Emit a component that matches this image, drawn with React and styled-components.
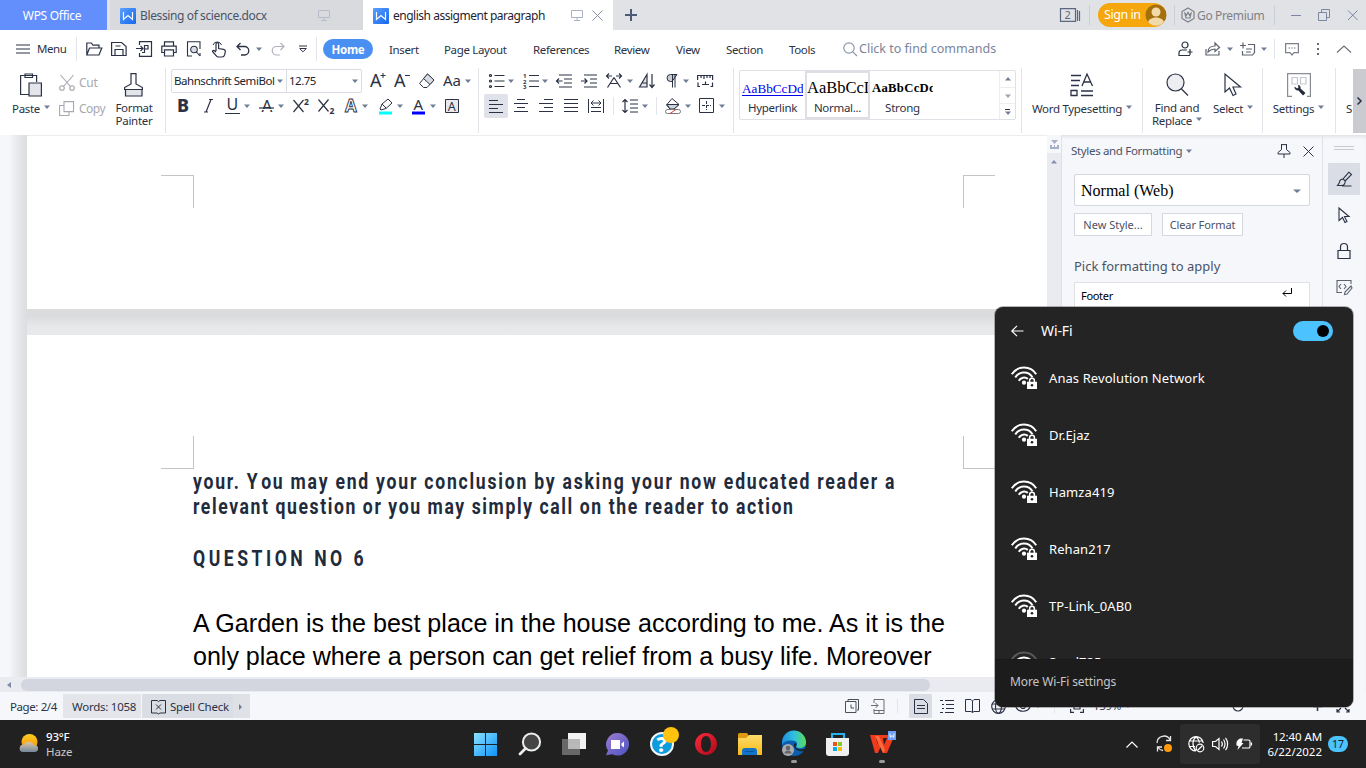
import React from 'react';
import styled, { createGlobalStyle, css } from 'styled-components';

const ui = `'Noto Sans', 'Open Sans', 'Liberation Sans', sans-serif`;
const ink = '#2b3245';

const Global = createGlobalStyle`
  * { box-sizing: border-box; }
  body { margin: 0; background: #f5f7fa; overflow: hidden; }
`;

const Screen = styled.div`
  position: relative;
  width: 1366px;
  height: 768px;
  overflow: hidden;
  display: flex;
  flex-direction: column;
  font-family: ${ui};
  font-size: 12px;
  color: ${ink};
  white-space: nowrap;
`;

/* ---------- shared parts ---------- */
const Cell = styled.div`
  flex: 0 0 ${p => p.$w}px;
  width: ${p => p.$w}px;
  height: ${p => (p.$h ? p.$h + 'px' : '100%')};
  display: flex;
  align-items: center;
  padding-top: ${p => p.$pt || 0}px;
`;

const Label = styled.span`
  font-size: ${p => p.$size || 12}px;
  letter-spacing: ${p => p.$ls || 0}px;
  color: ${p => p.$c || 'inherit'};
  font-weight: ${p => p.$weight || 400};
  line-height: 1;
`;

const Divider = styled.div`
  flex: 0 0 1px;
  width: 1px;
  height: ${p => p.$h}px;
  background: ${p => p.$c || '#e3e5ea'};
  align-self: ${p => p.$self || 'center'};
`;

const Svg = styled.svg`
  display: block;
  flex: none;
  overflow: visible;
`;

const Icon = ({ w = 16, h = 16, c = ink, sw = 1, children, ...rest }) => (
  <Svg width={w} height={h} viewBox={`0 0 ${w} ${h}`} fill="none" stroke={c} strokeWidth={sw} {...rest}>
    {children}
  </Svg>
);

const Caret = ({ c = '#6f7c98', up, w = 6 }) => (
  <Icon w={w} h={4} c="none"><path fill={c} d={up ? `M0 3.500h${w}L${w / 2} 0z` : `M0 .5h${w}L${w / 2} 4z`} /></Icon>
);

const Glyph = ({ x = 0, y, size, weight = 400, italic, c = ink, outline, children }) => (
  <text x={x} y={y} fontFamily="'Noto Sans', sans-serif" fontSize={size} fontWeight={weight}
    fontStyle={italic ? 'italic' : 'normal'} fill={outline ? 'none' : c} stroke={outline ? c : 'none'} strokeWidth={outline ? 0.9 : 0}>
    {children}
  </text>
);

/* ---------- title bar ---------- */
const TitleBar = styled.header`
  height: 30px;
  flex: none;
  display: flex;
  align-items: stretch;
  background: #e1e2e6;
`;
const OfficeTab = styled.div`
  width: 107px;
  background: #638ffd;
  color: #fff;
  display: flex;
  align-items: center;
  justify-content: center;
  padding: 2px 3px 0 0;
`;
const FileTab = styled.div`
  width: ${p => p.$w}px;
  margin-left: ${p => p.$ml || 0}px;
  padding-left: ${p => p.$pl}px;
  background: ${p => (p.$active ? '#fff' : '#d9dadd')};
  color: ${p => (p.$active ? '#1f2430' : '#4a5468')};
  display: flex;
  align-items: center;
`;
const SignIn = styled.div`
  width: 68px;
  height: 24px;
  border-radius: 12px;
  background: #f5a70d;
  color: #fff;
  display: flex;
  align-items: center;
  padding-left: 6px;
  gap: 4px;
`;

const DocLogo = () => (
  <Icon w={16} h={16} c="none">
    <defs><linearGradient id="dl" x1="0" y1="0" x2="1" y2="1"><stop offset="0" stopColor="#5aa0fb" /><stop offset="1" stopColor="#1668f0" /></linearGradient></defs>
    <rect width="16" height="16" rx="1" fill="url(#dl)" />
    <path d="M3.500 4v7.500L8 7.500l4.500 4V4" stroke="#fff" strokeWidth="1.200" />
  </Icon>
);
const Monitor = ({ c = '#a8b1c6' }) => (
  <Icon w={12} h={12} c={c}><path d="M.5 1.500h11v7h-11zM6 8.500v2.500M3 11.500h6" /></Icon>
);

/* ---------- menu row ---------- */
const MenuRow = styled.nav`
  height: 38px;
  flex: none;
  display: flex;
  align-items: center;
  background: #fff;
  padding-left: 16px;
`;
const HomePill = styled.div`
  width: 50px;
  height: 20px;
  border-radius: 10px;
  background: #4a90f2;
  color: #fff;
  display: flex;
  align-items: center;
  justify-content: center;
  padding-top: 2px;
`;

/* ---------- ribbon ---------- */
const Ribbon = styled.section`
  height: 67px;
  flex: none;
  display: flex;
  align-items: flex-start;
  background: #fff;
  position: relative;
`;
const Group = styled.div`
  flex: 0 0 ${p => p.$w}px;
  width: ${p => p.$w}px;
  height: 67px;
  padding-left: ${p => p.$pl || 0}px;
  display: flex;
  flex-direction: ${p => (p.$col ? 'column' : 'row')};
`;
const Row = styled.div`
  height: ${p => p.$h || 25}px;
  display: flex;
  align-items: center;
`;
const BigButton = styled.div`
  flex: 0 0 ${p => p.$w}px;
  display: flex;
  flex-direction: column;
  align-items: center;
  padding: 5px 0 0 ${p => p.$pl || 0}px;
`;
const BigLabel = styled.div`
  display: flex;
  align-items: center;
  gap: 4px;
  height: 13px;
  margin-top: ${p => p.$mt || 0}px;
  & > span { letter-spacing: -0.3px; }
  & > svg { margin-top: -3px; }
`;
const SmallButton = styled.div`
  height: 26px;
  display: flex;
  align-items: center;
  gap: 4px;
  padding-top: 2px;
  color: #a6a9b0;
`;
const FontBox = styled.div`
  width: 191px;
  height: 24px;
  border: 1px solid #d9dce2;
  border-radius: 2px;
  display: flex;
  align-items: center;
  color: #20242f;
`;
const FontPart = styled.div`
  width: ${p => p.$w}px;
  height: 22px;
  display: flex;
  align-items: center;
  justify-content: space-between;
  padding: 0 3px 0 2px;
  border-left: ${p => (p.$line ? '1px solid #d9dce2' : 'none')};
`;
const Pressed = styled.div`
  width: 24px;
  height: 24px;
  margin-left: -5px;
  border-radius: 2px;
  background: #dfe2e8;
  display: flex;
  align-items: center;
  justify-content: center;
`;
const Gallery = styled.div`
  width: 277px;
  height: 50px;
  margin-top: 2px;
  border: 1px solid #dfe1e6;
  border-radius: 2px;
  display: flex;
`;
const StyleCard = styled.div`
  width: ${p => p.$w}px;
  height: 48px;
  display: flex;
  flex-direction: column;
  align-items: center;
  overflow: hidden;
  ${p => p.$sel && css`border: 2px solid #dedfe4;`}
`;
const Sample = styled.div`
  width: 61px;
  height: ${p => (p.$sel ? 29 : 31)}px;
  padding-top: ${p => (p.$sel ? 6 : 9)}px;
  overflow: hidden;
  font-family: 'Liberation Serif', serif;
  font-size: ${p => p.$size}px;
  line-height: 17px;
  letter-spacing: ${p => p.$ls || 0}px;
  color: ${p => p.$c || '#000'};
  font-weight: ${p => p.$weight || 400};
  text-decoration: ${p => (p.$u ? 'underline' : 'none')};
  text-underline-offset: 2px;
`;
const GalleryScroll = styled.div`
  width: 16px;
  margin-left: auto;
  display: grid;
  grid-template-rows: repeat(3, 1fr);
  border-left: 1px solid #eceef1;
  & > div { display: flex; flex-direction: column; gap: 1px; align-items: center; justify-content: center; }
  & > div + div { border-top: 1px solid #eceef1; }
`;
const MoreBar = styled.div`
  width: 13px;
  height: 64px;
  margin-top: 1px;
  margin-left: auto;
  background: #c9cbd1;
  display: flex;
  align-items: center;
  justify-content: center;
`;

/* ---------- workspace ---------- */
const Workspace = styled.main`
  height: 557px;
  flex: none;
  display: flex;
  background: #f5f7fa;
  box-shadow: inset 0 3px 4px -2px rgba(0, 0, 0, 0.12);
`;
const DocColumn = styled.div`
  width: 1061px;
  display: flex;
  flex-direction: column;
`;
const DocView = styled.div`
  height: 542px;
  display: flex;
`;
const Gutter = styled.div`
  width: 27px;
  background: linear-gradient(to right, #f5f7fa 9px, #ebecef 15px, #dcdddf 27px);
`;
const Pages = styled.div`
  width: 1020px;
  display: flex;
  flex-direction: column;
  border-top: 1px solid #ececee;
`;
const Page = styled.div`
  height: ${p => p.$h}px;
  background: #fff;
  overflow: hidden;
`;
const PageGap = styled.div`
  height: 26px;
  background: linear-gradient(#dbdcde 7px, #e7e8ea 18px, #e8e9eb);
`;
const Marks = styled.div`
  display: flex;
  justify-content: space-between;
  width: 834px;
  height: 33px;
  margin: ${p => p.$mt}px 0 0 134px;
`;
const Mark = styled.div`
  width: ${p => (p.$right ? 32 : 33)}px;
  height: 33px;
  border: 0 solid #c4c4c4;
  border-top-width: ${p => (p.$low ? 0 : 1)}px;
  border-bottom-width: ${p => (p.$low ? 1 : 0)}px;
  border-left-width: ${p => (p.$right ? 1 : 0)}px;
  border-right-width: ${p => (p.$right ? 0 : 1)}px;
`;
const Prose = styled.div`
  padding-left: 166px;
`;
const Condensed = styled.div`
  width: max-content;
  font-family: 'Roboto', sans-serif;
  font-weight: 700;
  color: #222b3c;
  font-size: 22px;
  height: ${p => p.$h}px;
  line-height: 26px;
  letter-spacing: ${p => p.$ls}px;
  transform: scaleX(0.8);
  transform-origin: left;
`;
const Kern = styled.span`
  letter-spacing: ${p => p.$ls}px;
`;
const Body = styled.div`
  font-family: 'Liberation Sans', sans-serif;
  font-size: 25.1px;
  line-height: 33px;
  letter-spacing: ${p => p.$ls || 0}px;
  color: #000;
`;
const VScroll = styled.div`
  width: 14px;
  background: #e9ebf0;
  display: flex;
  flex-direction: column;
  align-items: center;
`;
const VTop = styled.div`
  width: 14px;
  height: 18px;
  background: #f5f7fa;
  display: flex;
  align-items: center;
  justify-content: center;
  margin-bottom: 7px;
`;
const HScroll = styled.div`
  height: 15px;
  background: #e9ebf0;
  display: flex;
  align-items: center;
  padding-left: 7px;
  gap: 10px;
`;
const HThumb = styled.div`
  width: 909px;
  height: 12px;
  border-radius: 6px;
  background: #d3d6de;
`;
const Panel = styled.aside`
  width: 261px;
  border-left: 1px solid #dfe1e6;
  padding: 0 12px;
  color: #4a5268;
`;
const PanelHead = styled.div`
  height: 30px;
  margin-top: 1px;
  display: flex;
  align-items: center;
  margin-left: -3px;
`;
const StyleSelect = styled.div`
  width: 236px;
  height: 32px;
  margin-top: 8px;
  border: 1px solid #d5d8df;
  border-radius: 2px;
  background: #fff;
  color: #000;
  padding: 1px 8px 0 6px;
  display: flex;
  align-items: center;
  justify-content: space-between;
  font: 16px 'Liberation Serif', serif;
`;
const Buttons = styled.div`
  display: flex;
  gap: 10px;
  margin-top: 7px;
`;
const Button = styled.div`
  width: ${p => p.$w}px;
  height: 23px;
  border: 1px solid #d5d8df;
  background: #fff;
  display: flex;
  align-items: center;
  justify-content: center;
`;
const PickTitle = styled.div`
  margin-top: 22px;
  height: 17px;
  display: flex;
  align-items: center;
`;
const StyleList = styled.div`
  width: 236px;
  height: 366px;
  margin-top: 7px;
  border: 1px solid #dfe1e6;
  background: #fff;
  color: #000;
`;
const StyleItem = styled.div`
  height: 24px;
  padding: 0 17px 0 6px;
  display: flex;
  align-items: center;
  justify-content: space-between;
  & > svg { margin-top: -6px; }
`;
const Rail = styled.aside`
  width: 44px;
  border-left: 1px solid #dfe1e6;
  padding-right: 2px;
  display: flex;
  flex-direction: column;
  align-items: center;
`;
const RailButton = styled.div`
  width: 32px;
  height: 32px;
  margin-bottom: 4px;
  background: ${p => (p.$on ? '#dadde5' : 'transparent')};
  border-radius: 1px;
  display: flex;
  align-items: center;
  justify-content: center;
`;

/* ---------- status bar ---------- */
const StatusBar = styled.footer`
  height: 28px;
  flex: none;
  display: flex;
  align-items: center;
  background: #f5f7fa;
  padding-left: 10px;
`;
const StatusBlock = styled.div`
  width: ${p => p.$w}px;
  height: 24px;
  background: ${p => p.$bg};
  margin-right: ${p => p.$mr || 0}px;
  padding-left: ${p => p.$pl}px;
  padding-top: 1px;
  display: flex;
  align-items: center;
  gap: 4px;
`;
const ViewOn = styled.div`
  width: 23px;
  height: 24px;
  background: #dadde4;
  border-radius: 1px;
  display: flex;
  align-items: center;
  justify-content: center;
`;

/* ---------- taskbar ---------- */
const Taskbar = styled.footer`
  height: 48px;
  flex: none;
  display: flex;
  align-items: center;
  background: #212121;
  color: #fff;
  padding-left: 19px;
`;
const Weather = styled.div`
  width: 455px;
  display: flex;
  align-items: center;
  gap: 7px;
  & > svg { margin-top: -3px; }
`;
const Stack = styled.div`
  display: flex;
  flex-direction: column;
  gap: 4px;
  align-items: ${p => (p.$right ? 'flex-end' : 'flex-start')};
`;
const TaskApp = styled.div`
  width: 44px;
  height: 48px;
  display: flex;
  flex-direction: column;
  align-items: flex-start;
  padding-top: 12px;
  gap: 4px;
`;
const Running = styled.div`
  width: 6px;
  height: 3px;
  margin-left: 9px;
  border-radius: 2px;
  background: #9a9a9a;
`;
const Tray = styled.div`
  width: 80px;
  height: 40px;
  border-radius: 4px;
  background: #2d2d2d;
  display: flex;
  align-items: center;
  justify-content: center;
  gap: 8px;
`;
const Clock = styled.div`
  width: 62px;
  display: flex;
  justify-content: flex-end;
`;
const Badge = styled.div`
  width: 20px;
  height: 16px;
  margin-left: 6px;
  border-radius: 8px;
  background: #4cc2ff;
  color: #10202c;
  display: flex;
  align-items: center;
  justify-content: center;
`;

/* ---------- Wi-Fi flyout ---------- */
const Flyout = styled.div`
  position: absolute;
  left: 995px;
  top: 307px;
  width: 358px;
  height: 400px;
  border-radius: 8px;
  background: #242424;
  color: #fff;
  overflow: hidden;
  box-shadow: 0 0 0 1px rgba(90, 90, 90, 0.45);
  display: flex;
  flex-direction: column;
`;
const FlyHead = styled.div`
  height: 43px;
  flex: none;
  padding: 5px 20px 0 16px;
  display: flex;
  align-items: center;
`;
const Toggle = styled.div`
  width: 40px;
  height: 20px;
  border-radius: 10px;
  margin-left: auto;
  background: #4cc2ff;
  padding-right: 4px;
  display: flex;
  align-items: center;
  justify-content: flex-end;
  &::after { content: ''; width: 12px; height: 12px; border-radius: 6px; background: #000; }
`;
const NetList = styled.div`
  height: 309px;
  overflow: hidden;
`;
const Net = styled.div`
  height: ${p => (p.$last ? 54 : 57)}px;
  padding-left: 16px;
  display: flex;
  align-items: center;
  gap: 12px;
  & > svg { margin-top: ${p => (p.$last ? 1 : -2)}px; }
`;
const FlyFoot = styled.div`
  flex: 1;
  background: #1c1c1c;
  border-top: 1px solid #191919;
  padding: 0 0 3px 15px;
  color: #c6c6c6;
  display: flex;
  align-items: center;
`;

const WifiLock = ({ weak }) => (
  <Icon w={26} h={23} c="#fff" sw={2}>
    <path d="M.8 8.200a14.600 14.600 0 0 1 24.400 0" stroke={weak ? '#5a5a5a' : '#fff'} />
    <path d="M4.300 11.500a10 10 0 0 1 17.200-.3M7.800 14.800a6 6 0 0 1 9-1.900" />
    <circle cx="13" cy="16.700" r="2.100" fill="#fff" stroke="none" />
    <path d="M18.600 16v-1.300a2.400 2.400 0 0 1 4.800 0V16" strokeWidth="1.500" stroke="#fff" />
    <path d="M16 15.700h10V23H16z" fill="#fff" stroke="none" />
    <circle cx="21" cy="19.200" r="1.300" fill="#242424" stroke="none" />
  </Icon>
);

const Lines = ({ rows, w = 15, h = 16 }) => (
  <Icon w={w} h={h} sw={1.2}><path d={rows.map(([x1, x2, y]) => `M${x1} ${y}H${x2}`).join('')} /></Icon>
);

const MenuTab = ({ w, children }) => <Cell $w={w} $pt={2}><Label $size={11.5} $ls={-0.35}>{children}</Label></Cell>;

const networks = ['Anas Revolution Network', 'Dr.Ejaz', 'Hamza419', 'Rehan217', 'TP-Link_0AB0', 'Saad725'];

function Title() {
  return (
    <TitleBar>
      <OfficeTab><Label $size={12} $ls={-0.3}>WPS Office</Label></OfficeTab>
      <FileTab $w={253} $ml={3} $pl={10}>
        <Cell $w={20} $pt={1}><DocLogo /></Cell>
        <Cell $w={178} $pt={1}><Label $size={12} $ls={-0.38}>Blessing of science.docx</Label></Cell>
        <Monitor c="#b6bccb" />
      </FileTab>
      <FileTab $active $w={250} $pl={10}>
        <Cell $w={20} $pt={1}><DocLogo /></Cell>
        <Cell $w={178} $pt={1}><Label $size={12} $ls={-0.48}>english assigment paragraph</Label></Cell>
        <Cell $w={21}><Monitor /></Cell>
        <Icon w={11} h={30} c="#8791ab"><path d="M.5 10.500l10 10M10.500 10.500L.5 20.500" /></Icon>
      </FileTab>
      <Cell $w={12} />
      <Cell $w={435}><Icon w={12} h={12} c="#4d5a76" sw={2}><path d="M0 6h12M6 0v12" /></Icon></Cell>
      <Cell $w={29}>
        <Icon w={20} h={14} c="#5b6681" sw={1.200}>
          <path d="M.5.600h15v12.800H.5zM17.500 2v11M19.500 3v10" />
          <Glyph x={4.500} y={11} size={11} c="#5b6681">2</Glyph>
        </Icon>
      </Cell>
      <Cell $w={9}><Divider $h={20} $c="#cccfd6" /></Cell>
      <Cell $w={76}>
        <SignIn>
          <Label $size={12.500} $ls={-0.45}>Sign in</Label>
          <Icon w={22} h={22} c="none">
            <circle cx="11" cy="11" r="10.500" fill="#a4700c" />
            <circle cx="11" cy="8" r="4.500" fill="#f2d9a8" />
            <path d="M3 18c2-6 14-6 16 0a10.500 10.500 0 0 1-16 0z" fill="#f2d9a8" />
          </Icon>
        </SignIn>
      </Cell>
      <Cell $w={7}><Divider $h={20} $c="#cccfd6" /></Cell>
      <Cell $w={16}>
        <Icon w={14} h={16} c="#7d8088" sw={1.200}><path d="M7 1l6 3.500v7L7 15l-6-3.500v-7z" /><path d="M4 6.500L5 11h4l1-4.500L8.500 8 7 5.500 5.500 8z" /></Icon>
      </Cell>
      <Cell $w={77} $pt={1}><Label $size={12} $c="#7f8187" $ls={-0.35}>Go Premium</Label></Cell>
      <Cell $w={17}><Divider $h={20} $c="#cccfd6" /></Cell>
      <Cell $w={27}><Icon w={11} h={11} c="#7b86a3"><path d="M0 5.500h10" /></Icon></Cell>
      <Cell $w={30}><Icon w={13} h={12} c="#7b86a3"><path d="M.5 3.500h8v8h-8zM3.500 3.500v-3h8v8h-3" /></Icon></Cell>
      <Icon w={10} h={30} c="#7b86a3"><path d="M0 10.500l9.500 9.500M9.500 10.500L0 20" /></Icon>
    </TitleBar>
  );
}

function Menu() {
  return (
    <MenuRow>
      <Cell $w={21}><Icon w={14} h={10} sw={1.200}><path d="M0 1h14M0 5h14M0 9h14" /></Icon></Cell>
      <Cell $w={39}><Label $size={11.500} $ls={-0.4}>Menu</Label></Cell>
      <Cell $w={10}><Divider $h={24} /></Cell>
      <Cell $w={25}><Icon w={16} h={16} sw={1.200}><path d="M.8 14V2h4.500L7 4.200h6v2.800M.8 14L3.500 7h12.300L13 14z" /></Icon></Cell>
      <Cell $w={25}><Icon w={16} h={16} sw={1.200}><path d="M.6 1.500h10l4.500 4v9H.6zM4 14V8.500h8V14M4.500 5h5" /></Icon></Cell>
      <Cell $w={25}><Icon w={17} h={16} sw={1.200}><path d="M3.500 4V.6h12v14.800h-12V12M0 7.500h7M4.500 5L7 7.500 4.500 10M8 4.500h4v3.500H8.500M8.500 4v7.500h-2.500" /></Icon></Cell>
      <Cell $w={25}><Icon w={16} h={16} sw={1.200}><path d="M3.500 5V.8h9V5M3.500 11.500H.8V5.200h14.400v6.300h-2.700M3.500 8.800h9v6.200h-9z" /></Icon></Cell>
      <Cell $w={25}><Icon w={16} h={16} sw={1.100}><path d="M6 15H1.500V.8h12.500V8M14 12v3" /><circle cx="8" cy="8.500" r="3.300" fill="#d9dce2" /><path d="M10.500 11l3.500 4" /></Icon></Cell>
      <Cell $w={25}><Icon w={16} h={17} sw={1.200}><path d="M5 10V3a1.300 1.300 0 0 1 2.600 0v4.500l5 .8c1.500.3 1.900 1 1.700 2.500l-.7 3c-.4 1.500-1.200 2.200-2.600 2.200H7.500c-1 0-1.600-.4-2.200-1.200L1.500 10.500c0-1.500 1.500-1.500 3.500.5" /><path d="M2 4a4.500 4.500 0 0 1 8.500 0" strokeWidth="1" /></Icon></Cell>
      <Cell $w={20}><Icon w={14} h={14} sw={1.300}><path d="M4.500 1L1 4.500 4.500 8M1 4.500h7.500a4.200 4.200 0 0 1 0 8.500H5" /></Icon></Cell>
      <Cell $w={15}><Caret /></Cell>
      <Cell $w={28}><Icon w={14} h={14} c="#b1b4bb" sw={1.200}><path d="M9.500 1L13 4.500 9.500 8M13 4.500H5.500a4.200 4.200 0 0 0 0 8.500H9" /></Icon></Cell>
      <Cell $w={17}><Icon w={8} h={8}><path d="M0 1h8M.7 3.500L4 6.800l3.300-3.300z" /></Icon></Cell>
      <Cell $w={7}><Divider $h={24} /></Cell>
      <Cell $w={66}><HomePill><Label $size={11.500} $weight={700} $ls={-0.3}>Home</Label></HomePill></Cell>
      <MenuTab w={55}>Insert</MenuTab>
      <MenuTab w={89}>Page Layout</MenuTab>
      <MenuTab w={81}>References</MenuTab>
      <MenuTab w={62}>Review</MenuTab>
      <MenuTab w={50}>View</MenuTab>
      <MenuTab w={63}>Section</MenuTab>
      <MenuTab w={54}>Tools</MenuTab>
      <Cell $w={16}><Icon w={15} h={15} c="#8d97ad" sw={1.200}><circle cx="6" cy="6" r="5.200" /><path d="M9.800 9.800L14 14" /></Icon></Cell>
      <Cell $w={319}><Label $size={12.500} $c="#7a849c">Click to find commands</Label></Cell>
      <Cell $w={27}><Icon w={15} h={16} sw={1.200}><circle cx="7" cy="4" r="3" /><path d="M9 9H4c-2 0-3 1.500-3 3v2.500h11M12 8v6M9.500 11h5" /></Icon></Cell>
      <Cell $w={22}><Icon w={16} h={16} c="#5d626e" sw={1.200}><path d="M1 8v6h13v-4M3 11c0-4 3-6 7-6V2l4.500 4.500L10 10.500V8c-3 0-5 1-7 3z" /></Icon></Cell>
      <Cell $w={13}><Caret /></Cell>
      <Cell $w={21}><Icon w={16} h={14} c="#5d626e" sw={1.200}><path d="M0 3.500h6M3 .5v6M8 2.500h6.500v8l-2 2.500H2.500V9M6 7h6M6 10h5" /></Icon></Cell>
      <Cell $w={13}><Caret /></Cell>
      <Cell $w={11}><Divider $h={20} /></Cell>
      <Cell $w={32}><Icon w={14} h={13} c="#7b7f88" sw={1.200}><path d="M.6.600h12.800v9H9l-2 2.400-2-2.400H.6z" /><path d="M3.500 5h1.500M6.300 5h1.500M9 5h1.500" /></Icon></Cell>
      <Cell $w={20}><Icon w={3} h={14} c="none"><path fill="#686d78" d="M0 1h2v2H0zM0 6h2v2H0zM0 11h2v2H0z" /></Icon></Cell>
      <Icon w={14} h={8} c="#686d78" sw={1.100}><path d="M0 7.500L7 1l7 6.500" /></Icon>
    </MenuRow>
  );
}

const C = ({ w }) => <Cell $w={w}><Caret /></Cell>;

function RibbonBar() {
  return (
    <Ribbon>
      <Group $w={165}>
        <BigButton $w={59} $pl={3}>
          <Icon w={22} h={24} sw={1.200}><path d="M9 21.500H.6V2.500h16V9M5 4.500V1h7.500v3.500z" /><path d="M9 10h12.400v13H9z" fill="#e3e5ea" /></Icon>
          <BigLabel $mt={5}><Label $size={11.500} $ls={-0.5}>Paste</Label><Caret /></BigLabel>
        </BigButton>
        <Cell $w={54} $h={54}>
          <div>
            <SmallButton><Icon w={16} h={16} c="#a6a9b0" sw={1.100}><path d="M1.500 0l10.500 12M14.500 0L4 12" /><circle cx="3" cy="13" r="2.300" /><circle cx="13" cy="13" r="2.300" /></Icon><Label $size={12} $ls={-0.3}>Cut</Label></SmallButton>
            <SmallButton><Icon w={16} h={16} c="#a6a9b0" sw={1.100}><path d="M5 .6h9.500v10H5zM5 4.500H.6v10H10v-4" /></Icon><Label $size={12} $ls={-0.5}>Copy</Label></SmallButton>
          </div>
        </Cell>
        <BigButton $w={42}>
          <Icon w={20} h={24} sw={1.200}><path d="M7 11V.6h5V11l6.400 3.500v2H.6v-2z" /><path d="M1.500 16.500h16.500V23H1.500z" fill="#e3e5ea" /></Icon>
          <BigLabel $mt={4}><Label $size={11.500}>Format</Label></BigLabel>
          <BigLabel><Label $size={11.500}>Painter</Label></BigLabel>
        </BigButton>
      </Group>
      <Divider $h={65} $self="flex-start" />
      <Group $w={312} $pl={5} $col>
        <Row $h={25}>
          <Cell $w={199}>
            <FontBox>
              <FontPart $w={114}><Label $size={11.500} $ls={-0.45}>Bahnschrift SemiBol</Label><Caret /></FontPart>
              <FontPart $w={75} $line><Label $size={11.500} $ls={-0.5}>12.75</Label><Caret /></FontPart>
            </FontBox>
          </Cell>
          <Cell $w={24}><Icon><Glyph x={0} y={14} size={18}>A</Glyph><path d="M10.500 2.500h5M13 0v5" /></Icon></Cell>
          <Cell $w={25}><Icon><Glyph x={0} y={14} size={18}>A</Glyph><path d="M11 2.500h5" /></Icon></Cell>
          <Cell $w={25}><Icon><path d="M8.500 1l6.500 6-7 7.500H4.500L.5 10.500z" /><path d="M8.500 1l6.500 6-4 4.500L4.500 5.500z" fill="#d9dce2" /></Icon></Cell>
          <Cell $w={21}><Icon><Glyph x={-1} y={13} size={15}>Aa</Glyph></Icon></Cell>
          <C w={10} />
        </Row>
        <Row $h={26}>
          <Cell $w={6} />
          <Cell $w={26}><Icon><Glyph x={0} y={14} size={18} weight={800}>B</Glyph></Icon></Cell>
          <Cell $w={22}><Icon><path d="M6 1.500h4M1 14h4M8 1.500L3 14" strokeWidth="1.200" /></Icon></Cell>
          <Cell $w={19}><Icon><Glyph x={1.500} y={12} size={16}>U</Glyph><path d="M0 15.500h15" /></Icon></Cell>
          <C w={15} />
          <Cell $w={19}><Icon><Glyph x={2.500} y={13.500} size={17}>A</Glyph><path d="M2 11.500h11" stroke="#fff" /><path d="M0 10h15" strokeWidth="1.200" /></Icon></Cell>
          <C w={15} />
          <Cell $w={25}><Icon sw={1.200}><path d="M.5 2l10 12M10.500 2L.5 14" /><Glyph x={11} y={7} size={8.500} weight={700}>2</Glyph></Icon></Cell>
          <Cell $w={26}><Icon sw={1.200}><path d="M.5 1.500l10 12M10.500 1.500L.5 13.500" /><Glyph x={11.500} y={16} size={8.500} weight={700}>2</Glyph></Icon></Cell>
          <Cell $w={18}><Icon><Glyph x={1} y={14} size={17} weight={700} outline>A</Glyph></Icon></Cell>
          <C w={16} />
          <Cell $w={19}><Icon><path d="M2 11l2-5 6-5 4 4-6 5.500-5 1.500zM4 6l4 4" /><path d="M1 15h13" stroke="#0ff" strokeWidth="3" /></Icon></Cell>
          <C w={14} />
          <Cell $w={19}><Icon><Glyph x={2.500} y={12} size={15}>A</Glyph><path d="M1 15h13" stroke="#00f" strokeWidth="3" /></Icon></Cell>
          <C w={15} />
          <Icon><path d="M.5 1.500h13v13H.5z" fill="#e7e9ed" /><Glyph x={2.800} y={12.700} size={12.500}>A</Glyph></Icon>
        </Row>
      </Group>
      <Divider $h={65} $self="flex-start" />
      <Group $w={254} $pl={10} $col>
        <Row $h={25}>
          <Cell $w={19}><Icon sw={1.200}><path d="M5.500 2.500H15.500M5.500 8H15.500M5.500 13.500H15.500" /><circle cx="1.500" cy="2.500" r="1" /><circle cx="1.500" cy="8" r="1" /><circle cx="1.500" cy="13.500" r="1" /></Icon></Cell>
          <C w={15} />
          <Cell $w={19}><Icon sw={1.200}><path d="M6 2.500h10M6 8h10M6 13.500h10" /><Glyph y={5} size={6} weight={700}>1</Glyph><Glyph y={10.500} size={6} weight={700}>2</Glyph><Glyph y={16} size={6} weight={700}>3</Glyph></Icon></Cell>
          <C w={14} />
          <Cell $w={25}><Icon sw={1.200}><path d="M3 2h13M8 6h8M8 10h8M3 14h13M6.500 8H.5M3 5.500L.5 8 3 10.500" /></Icon></Cell>
          <Cell $w={25}><Icon sw={1.200}><path d="M3 2h13M9 6h7M9 10h7M3 14h13M0 8h6M3.500 5.500L6 8l-2.500 2.500" /></Icon></Cell>
          <Cell $w={21}><Icon sw={1.200}><path d="M.5 3H6M10 3h5.500M3 .5L.5 3 3 5.500M13 .5L15.500 3 13 5.500M8 4.500L1.500 14.500M8 4.500l6.500 10M4.500 10.500h7" /></Icon></Cell>
          <C w={12} />
          <Cell $w={27}><Icon sw={1.200}><path d="M.5 14L8 1.500V14zM3.500 10H8" fill="#e3e5ea" /><path d="M13 1v13M10.500 11.500L13 14.500l2.500-3" /></Icon></Cell>
          <Cell $w={17}><Icon w={12}><path d="M11 1.500H4.500a3.500 3.500 0 0 0 0 7H6z" fill="#c9ccd4" /><path d="M6.500 1.500v13M9 1.500v13" /></Icon></Cell>
          <C w={14} />
          <Icon sw={1.200}><path d="M.6 7V2.500h15V7M4 2.500V5M7 2.500V6M10 2.500V5M13 2.500V5M5 11.500h7M8.500 8.500v3M1 9.500v4h2M15.500 9.500v4h-2" /></Icon>
        </Row>
        <Row $h={26}>
          <Cell $w={25}><Pressed><Lines rows={[[0, 9, 1.500], [0, 14, 5.500], [0, 9, 9.500], [0, 14, 13.500]]} w={14} h={15} /></Pressed></Cell>
          <Cell $w={25}><Lines rows={[[3, 11, 1.500], [0, 14, 5.500], [3, 11, 9.500], [0, 14, 13.500]]} /></Cell>
          <Cell $w={25}><Lines rows={[[5, 14, 1.500], [0, 14, 5.500], [5, 14, 9.500], [0, 14, 13.500]]} /></Cell>
          <Cell $w={24}><Lines rows={[[0, 14, 1.500], [0, 14, 5.500], [0, 14, 9.500], [0, 14, 13.500]]} /></Cell>
          <Cell $w={25}><Icon><path d="M.5 1v14M15.500 1v14M3 5h10M5.500 2.500L3 5l2.500 2.500M10.500 2.500L13 5l-2.500 2.500M3 9.500h10M3 13.500h10" /></Icon></Cell>
          <Cell $w={9}><Divider $h={18} /></Cell>
          <Cell $w={20}><Icon sw={1.200}><path d="M3 1.500v13M.5 4L3 1.500 5.500 4M.5 12L3 14.500 5.500 12M8 2h8M8 6h8M8 10h8M8 14h8" /></Icon></Cell>
          <C w={14} />
          <Cell $w={9}><Divider $h={18} /></Cell>
          <Cell $w={20}><Icon><path d="M7 .5l7 6L9 11H5L1.500 7z" /><path d="M2 6.500h12L9 11H5z" fill="#cfd2d9" /><rect x=".5" y="11.500" width="15" height="4" rx="2" fill="#fff" stroke="#777" /><path d="M5 15.500l6-4" stroke="#e0483e" /></Icon></Cell>
          <C w={14} />
          <Cell $w={20}><Icon><path d="M.5 .5h14v14H.5z" /><path d="M7.500 3v9M3 7.500h9" strokeDasharray="3 1" /></Icon></Cell>
          <C w={6} />
        </Row>
      </Group>
      <Divider $h={65} $self="flex-start" />
      <Group $w={287} $pl={5}>
        <Gallery>
          <StyleCard $w={65}><Sample $size={13.200} $c="#0000ee" $u>AaBbCcDd</Sample><Label $size={11.500} $ls={-0.3}>Hyperlink</Label></StyleCard>
          <StyleCard $w={65} $sel><Sample $sel $size={16.500}>AaBbCcDd</Sample><Label $size={11.500} $ls={-0.3}>Normal...</Label></StyleCard>
          <StyleCard $w={65}><Sample $size={12.700} $weight={700} $ls={0.300}>AaBbCcDd</Sample><Label $size={11.500} $ls={-0.2}>Strong</Label></StyleCard>
          <GalleryScroll>
            <div><Caret up /></div>
            <div><Caret c="#9aa3b6" /></div>
            <div><Icon w={5} h={1}><path d="M0 .5h5" /></Icon><Caret /></div>
          </GalleryScroll>
        </Gallery>
      </Group>
      <Divider $h={65} $self="flex-start" />
      <Group $w={120}>
        <BigButton $w={120}>
          <Icon w={24} h={24} sw={1.300}><path d="M1 2.500h10M1 7.500h9M1 12.500h8M11 18h12M11 22.500h12M1 17.500h6v5H1zM12 13l5-12 5.500 12M14 9h7" /></Icon>
          <BigLabel $mt={5}><Label $size={11.500}>Word Typesetting</Label><Caret /></BigLabel>
        </BigButton>
      </Group>
      <Divider $h={65} $self="flex-start" />
      <Group $w={119} $pl={5}>
        <BigButton $w={58}>
          <Icon w={22} h={24} sw={1.200}><circle cx="9.500" cy="9.500" r="8.500" fill="#eceef1" /><path d="M15.500 16l6.500 6.500" /></Icon>
          <BigLabel $mt={4}><Label $size={11.500}>Find and</Label></BigLabel>
          <BigLabel><Label $size={11.500}>Replace</Label><Caret /></BigLabel>
        </BigButton>
        <BigButton $w={54}>
          <Icon w={18} h={24} sw={1.200}><path d="M1 1v18l4.500-4L9 22.500l3-1.500-3-7h7.500z" /></Icon>
          <BigLabel $mt={5}><Label $size={11.500}>Select</Label><Caret /></BigLabel>
        </BigButton>
      </Group>
      <Divider $h={65} $self="flex-start" />
      <Group $w={72}>
        <BigButton $w={71}>
          <Icon w={24} h={24} c="#888c95" sw={1.200}><path d="M5 23.400H.6V.6h22.800v22.800H20" /><path d="M5 4.500h5.500V11H5zM13.500 4.500H19V11h-5.500z" stroke="#c4c7cd" /><path d="M7.500 13.500a3.500 3.500 0 0 0 4 4l4.500 5 2.500-2.500-5-4.500c.5-2-.7-3.500-2.500-3.800l.5 2.800-1.500 1z" fill="#222a3a" stroke="none" /></Icon>
          <BigLabel $mt={5}><Label $size={11.500}>Settings</Label><Caret /></BigLabel>
        </BigButton>
      </Group>
      <Divider $h={65} $self="flex-start" />
      <Group $w={17} $pl={10}><BigLabel $mt={34}><Label $size={11.500}>S</Label></BigLabel></Group>
      <MoreBar><Icon w={5} h={8} sw={1.500}><path d="M.5.5L4 4 .5 7.500" /></Icon></MoreBar>
    </Ribbon>
  );
}

function Document() {
  return (
    <DocColumn>
      <DocView>
        <Gutter />
        <Pages>
          <Page $h={173}>
            <Marks $mt={39}><Mark /><Mark $right /></Marks>
          </Page>
          <PageGap />
          <Page $h={342}>
            <Marks $mt={101}><Mark $low /><Mark $low $right /></Marks>
            <Prose>
              <Condensed $h={25} $ls={2.200}>your. <Kern $ls={4.500}>Y</Kern>ou may end your conclusion by asking your now educated reader a</Condensed>
              <Condensed $h={52} $ls={1.980}>relevant question or you may simply call on the reader to action</Condensed>
              <Condensed $h={61} $ls={4.400}>QUESTION NO 6</Condensed>
              <Body>A Garden is the best place in the house according to me. As it is the</Body>
              <Body $ls={-0.03}>only place where a person can get relief from a busy life. Moreover</Body>
            </Prose>
          </Page>
        </Pages>
        <VScroll>
          <VTop><Icon w={9} h={9} c="none"><path fill="#a6b0c6" d="M1 0h7L4.500 4zM0 5h2v2h2V5h1v2h2V5h2v4H0z" /></Icon></VTop>
          <Caret up c="#8490ab" />
        </VScroll>
      </DocView>
      <HScroll>
        <Icon w={4} h={6} c="none"><path fill="#7f8ba8" d="M4 0v6L0 3z" /></Icon>
        <HThumb />
      </HScroll>
    </DocColumn>
  );
}

function SidePanel() {
  return (
    <>
      <Panel>
        <PanelHead>
          <Cell $w={115}><Label $size={11.500} $ls={-0.33}>Styles and Formatting</Label></Cell>
          <Cell $w={91}><Caret /></Cell>
          <Cell $w={26}><Icon w={14} h={14}><path d="M4 .6h6M4.500.6v5L1 8.500v1.500h12V8.500L9.500 5.600v-5M7 10v4" /></Icon></Cell>
          <Icon w={11} h={11}><path d="M.5.5l10 10M10.500.5l-10 10" /></Icon>
        </PanelHead>
        <StyleSelect>Normal (Web)<Caret w={8} /></StyleSelect>
        <Buttons>
          <Button $w={78}><Label $size={11}>New Style...</Label></Button>
          <Button $w={81}><Label $size={11} $ls={-0.1}>Clear Format</Label></Button>
        </Buttons>
        <PickTitle><Label $size={13}>Pick formatting to apply</Label></PickTitle>
        <StyleList>
          <StyleItem><Label $size={11} $ls={-0.3}>Footer</Label><Icon w={10} h={7} c="#000"><path d="M9.500-1v5.500H1M4 1.500l-3 3 3 3" /></Icon></StyleItem>
        </StyleList>
      </Panel>
      <Rail>
        <Icon w={20} h={28} c="#c8cad0"><path d="M0 11.500h20M0 14.500h20" /></Icon>
        <RailButton $on><Icon sw={1.100}><path d="M13 1.200L7 8l2.200 2L15.500 3.500zM7 8c-3 0-3.500 2-3.800 4L1.500 14.500h4c2.500 0 3.700-1.500 3.700-4.500M6 15h9.500" /></Icon></RailButton>
        <RailButton><Icon sw={1.100}><path d="M3 1v12.500l3.500-3L9 15.500l2-1-2.500-5H13z" /></Icon></RailButton>
        <RailButton><Icon sw={1.200}><path d="M2 7.500h12v8H2zM4.500 7.500V4a3.500 3.500 0 0 1 7 0v3.500" /></Icon></RailButton>
        <RailButton><Icon c="#5c6270" sw={1.100}><path d="M6 13.500H1V1.500h14V5M5 5L3 7.500 5 10M8 5l2 2.500L8 10M15 7l-6 6-.5 2.500L11 15l5-6z" /></Icon></RailButton>
      </Rail>
    </>
  );
}

function Status() {
  return (
    <StatusBar>
      <Cell $w={53} $pt={1}><Label $size={11.500} $ls={-0.4}>Page: 2/4</Label></Cell>
      <StatusBlock $w={78} $bg="#e3e5ea" $pl={9} $mr={1}><Label $size={11.500} $ls={-0.25}>Words: 1058</Label></StatusBlock>
      <StatusBlock $w={91} $bg="#dadde4" $pl={9}>
        <Icon w={15} h={14}><path d="M6 .5H.5v12.500H6l1.500 1 1.500-1h5.500V.5H9l-1.500 1zM5 4.500l5 5M10 4.500l-5 5" /></Icon>
        <Label $size={11.500} $ls={-0.22}>Spell Check</Label>
      </StatusBlock>
      <StatusBlock $w={17} $bg="#dfe1e7" $pl={6}><Icon w={3} h={6} c="none"><path fill="#6f7c98" d="M0 0l3 3-3 3z" /></Icon></StatusBlock>
      <Cell $w={595} />
      <Cell $w={26}><Icon w={14} h={14} c="#4b4f5a"><path d="M.5 2.500h10.500v11H.5zM3 2V.5h10.500V11H12M6 5.500v3.500h3" /></Icon></Cell>
      <Cell $w={26}><Icon w={14} h={15} c="#6a6d75"><path d="M3 4V.5h10v14H3V10M0 6.500h7M4.500 4L7 6.500 4.500 9M3 11.500h10M7 13h2" /></Icon></Cell>
      <Cell $w={12}><Divider $h={14} /></Cell>
      <Cell $w={31}><ViewOn><Icon w={14} h={15}><path d="M.5.500H9.500l4 4v10H.5zM3 6.500h8M3 9.500h8" /></Icon></ViewOn></Cell>
      <Cell $w={25}><Icon w={14} h={14}><path d="M0 1.500h3M5 1.500h9M2 5.500h2M6 5.500h8M2 9.500h2M6 9.500h8M0 13.500h3M5 13.500h9" /></Icon></Cell>
      <Cell $w={26}><Icon w={15} h={14}><path d="M7.500 2L6 .5H.5v12H6l1.500 1 1.500-1h5.500V.5H9zV13.500" /></Icon></Cell>
      <Cell $w={24}><Icon w={15} h={15} sw={1.200}><circle cx="7.500" cy="7.500" r="6.800" /><ellipse cx="7.500" cy="7.500" rx="3" ry="6.800" /><path d="M1 5h13M1 10h13" /></Icon></Cell>
      <Cell $w={20}><Icon w={16} h={12} sw={1.200}><path d="M.5 6C3-1 13-1 15.500 6 13 13 3 13 .5 6z" /><circle cx="8" cy="6" r="2.500" /></Icon></Cell>
      <Cell $w={19}><Caret /></Cell>
      <Cell $w={16}><Divider $h={14} /></Cell>
      <Cell $w={23}><Icon w={14} h={13} sw={1.200}><path d="M4 .6H.6V4M10 .6h3.400V4M4 12.400H.6V9M10 12.400h3.400V9M4 4h6v5H4z" /></Icon></Cell>
      <Cell $w={32}><Label $size={11.500} $ls={-0.3}>159%</Label></Cell>
      <Cell $w={107}><Caret /></Cell>
      <Cell $w={81}><Icon w={12} h={12} sw={1.200}><circle cx="6" cy="6" r="5" fill="#fff" /></Icon></Cell>
      <Cell $w={23}><Icon w={9} h={9} sw={1.500}><path d="M0 4.500h9M4.500 0v9" /></Icon></Cell>
      <Icon w={14} h={13} sw={1.200}><path d="M1 4V1h3M10 1h3v3M1 9v3h3M13 9v3h-3M1 1l4 4M13 1L9 5M1 12l4-4M13 12L9 8" /></Icon>
    </StatusBar>
  );
}

function Task() {
  return (
    <Taskbar>
      <Weather>
        <Icon w={20} h={20} c="none">
          <defs>
            <linearGradient id="sun" x1="0" y1="0" x2="0" y2="1"><stop offset="0" stopColor="#ffcf1f" /><stop offset="1" stopColor="#f58a0b" /></linearGradient>
            <linearGradient id="cl" x1="0" y1="0" x2="0" y2="1"><stop offset="0" stopColor="#dfc6a3" /><stop offset="1" stopColor="#74889c" /></linearGradient>
          </defs>
          <circle cx="10.500" cy="9" r="8" fill="url(#sun)" />
          <path d="M4 19a3.600 3.600 0 0 1 .5-7.200 6 6 0 0 1 10.500.2 3.500 3.500 0 0 1 1 7z" fill="url(#cl)" />
        </Icon>
        <Stack><Label $size={11.500} $weight={500} $ls={-0.2}>93°F</Label><Label $size={11.500} $c="#c9c9c9" $ls={-0.1}>Haze</Label></Stack>
      </Weather>
      <TaskApp><Icon w={24} h={24} c="none">
        <defs><linearGradient id="win" x1="0" y1="0" x2="1" y2="1"><stop offset="0" stopColor="#8be2ff" /><stop offset="1" stopColor="#0d93f7" /></linearGradient></defs>
        <path fill="url(#win)" d="M0 1h11v11H0zM12 1h11v11H12zM0 13h11v11H0zM12 13h11v11H12z" />
      </Icon></TaskApp>
      <TaskApp><Icon w={24} h={24} c="#eceff0" sw={2}><circle cx="13.500" cy="10" r="8.600" fill="#454545" /><path d="M7.500 16.500L2 22" strokeWidth="2.800" strokeLinecap="round" /></Icon></TaskApp>
      <TaskApp><Icon w={24} h={24} c="none"><path fill="#f3f3f3" d="M6 1h18v16H6z" /><path fill="#686868" d="M0 7h18v16H0z" /><path fill="#b8b8b8" d="M6 7h12v10H6z" /></Icon></TaskApp>
      <TaskApp><Icon w={24} h={24} c="none">
        <defs><linearGradient id="ch" x1="0" y1="0" x2="1" y2="1"><stop offset="0" stopColor="#9f7dcf" /><stop offset="1" stopColor="#4a53c4" /></linearGradient></defs>
        <path d="M12 1a11.300 11.300 0 1 1-5.500 21.300L0 23.300l2-4.800A11.300 11.300 0 0 1 12 1z" fill="url(#ch)" />
        <path d="M5 8h9v9H5zM15.500 11.500L18 9.500v6l-2.500-2z" fill="#fff" />
      </Icon></TaskApp>
      <TaskApp><Icon w={24} h={24} c="none">
        <circle cx="12" cy="12" r="11" fill="#0c9bdc" stroke="#f1f6f8" strokeWidth="2" />
        <Glyph x={6.500} y={19.500} size={21} weight={800} c="#fff">?</Glyph>
        <circle cx="21" cy="3" r="8" fill="#ffc20e" />
      </Icon></TaskApp>
      <TaskApp><Icon w={24} h={24} c="none">
        <defs><linearGradient id="op" x1="0" y1="0" x2="1" y2="1"><stop offset="0" stopColor="#ff2a3a" /><stop offset="1" stopColor="#a80a1b" /></linearGradient></defs>
        <path fillRule="evenodd" fill="url(#op)" d="M12 1a11 11 0 1 0 .01 0zM12 4c3 0 5 3.500 5 8s-2 8-5 8-5-3.500-5-8 2-8 5-8z" />
      </Icon></TaskApp>
      <TaskApp><Icon w={24} h={24} c="none">
        <defs><linearGradient id="fo" x1="0" y1="0" x2="0" y2="1"><stop offset="0" stopColor="#ffdc6b" /><stop offset="1" stopColor="#f9ba17" /></linearGradient></defs>
        <path d="M0 2.500A1.500 1.500 0 0 1 1.500 1H9l2 3v4H0z" fill="#dd9a12" />
        <path d="M0 6h8l3-3h13v20H0z" fill="url(#fo)" />
        <path d="M4 23v-4a3 3 0 0 1 3-3h9a3 3 0 0 1 3 3v4z" fill="#1373c7" /><path d="M7 19.500h9" stroke="#0a559f" />
      </Icon></TaskApp>
      <TaskApp>
        <Icon w={24} h={24} c="none">
          <defs>
            <linearGradient id="e1" x1="0" y1="0" x2="1" y2="0"><stop offset="0" stopColor="#1d8fe0" /><stop offset=".5" stopColor="#2fc0e0" /><stop offset="1" stopColor="#5bdc5a" /></linearGradient>
          </defs>
          <circle cx="12" cy="12" r="12" fill="#0c5fae" />
          <path d="M0 11A12 12 0 0 1 24 10c.3 4-3 6-6.500 6-3 0-3.800-1-3-2 1.500-2 .5-5.500-4.500-5.500C5 8 1 10 0 13z" fill="url(#e1)" />
          <path d="M14 13c-1 3 2 5 6 4.500l4.500-1.500-1 3c-7 1.500-12-2-11.500-7 1-1.500 3-1 2 1z" fill="#212121" />
          <circle cx="6" cy="18" r="6" fill="#a9adb0" /><circle cx="6" cy="16" r="2.300" fill="#626569" /><path d="M2.300 21.500c.5-4 7-4 7.400 0z" fill="#626569" />
        </Icon>
        <Running />
      </TaskApp>
      <TaskApp><Icon w={24} h={24} c="none">
        <path d="M6 7V2h12v5" stroke="#29b0ee" strokeWidth="2.200" /><path d="M0 6h23v15a3 3 0 0 1-3 3H3a3 3 0 0 1-3-3z" fill="#f0f0f0" />
        <path d="M7 10h4v4H7z" fill="#f1511b" /><path d="M12 10h4v4h-4z" fill="#80cc28" /><path d="M7 15h4v4H7z" fill="#00adef" /><path d="M12 15h4v4h-4z" fill="#fbbc09" />
      </Icon></TaskApp>
      <TaskApp>
        <Icon w={26} h={24} c="none">
          <path d="M0 3h20l3 4-6 14h-4l-2.500-6L8 21H5z" fill="#f03a1c" />
          <path d="M6 6h4l-2 6zM13 6h4l-3 7z" fill="#212121" />
          <path d="M5 4h4l6 14-1.500 3H13L5 4z" fill="#ff6a3c" />
          <path d="M18-1h8v9h-8z" fill="#6fa0f7" /><path d="M19.800 1.500l.6 4 1.600-2 1.600 2 .6-4" stroke="#fff" strokeWidth=".9" />
        </Icon>
        <Running />
      </TaskApp>
      <Cell $w={212} />
      <Cell $w={30}><Icon w={12} h={7} c="#fff" sw={1.200}><path d="M.5 6.500L6 1l5.500 5.500" /></Icon></Cell>
      <Cell $w={24}><Icon c="#e8e8e8" sw={1.300}><path d="M1 7a7 7 0 0 1 13-3.500M14.500 0v4.500H10M7 14.500a7 7 0 0 1-5-3M1.500 15.500V11H6" /><circle cx="12" cy="12" r="4" fill="#ff9a0b" stroke="none" /></Icon></Cell>
      <Tray>
        <Icon c="#fff" sw={1.200}><path d="M8 15A7.200 7.200 0 1 1 15.200 7M8 15C4 11 4 4 8 .8c2.500 2 3.300 4 3.400 6M1.500 5h13M1.500 10.500H7" /><circle cx="12" cy="12" r="3.800" /><path d="M9.500 14.500l5-5" /></Icon>
        <Icon c="#fff" sw={1.200}><path d="M.6 5.500H3.500L7 2.500v11l-3.500-3H.6zM9.500 5.500c1 1.500 1 3.500 0 5M11.500 3.500c2 2.500 2 6.500 0 9M13.500 1.800c2.800 3.500 2.800 9 0 12.400" /></Icon>
        <Icon c="#fff" sw={1.200}><path d="M7.500 4h5a1.500 1.500 0 0 1 1.500 1.500v5a1.500 1.500 0 0 1-1.500 1.500H6M15.500 6.500v3" /><path d="M4 2.500C1 4 0 6 .5 9.500l2 .5L1.500 14 7.500 7H5.500L7 2.500z" fill="#fff" stroke="none" /></Icon>
      </Tray>
      <Clock><Stack $right><Label $size={11.500} $ls={-0.1}>12:40 AM</Label><Label $size={11.500}>6/22/2022</Label></Stack></Clock>
      <Badge><Label $size={10.500}>17</Label></Badge>
    </Taskbar>
  );
}

export default function App() {
  return (
    <Screen>
      <Global />
      <Title />
      <Menu />
      <RibbonBar />
      <Workspace>
        <Document />
        <SidePanel />
      </Workspace>
      <Status />
      <Task />
      <Flyout>
        <FlyHead>
          <Cell $w={30}><Icon w={13} h={12} c="#fff" sw={1.200}><path d="M12.500 6H1M6 .8L.8 6 6 11.200" /></Icon></Cell>
          <Label $size={14} $ls={-0.1}>Wi-Fi</Label>
          <Toggle />
        </FlyHead>
        <NetList>
          {networks.map((n, i) => (
            <Net key={n} $last={i === 5}><WifiLock weak={i === 5} /><Label $size={13} $ls={0.080}>{n}</Label></Net>
          ))}
        </NetList>
        <FlyFoot><Label $size={12} $ls={-0.1}>More Wi-Fi settings</Label></FlyFoot>
      </Flyout>
    </Screen>
  );
}
